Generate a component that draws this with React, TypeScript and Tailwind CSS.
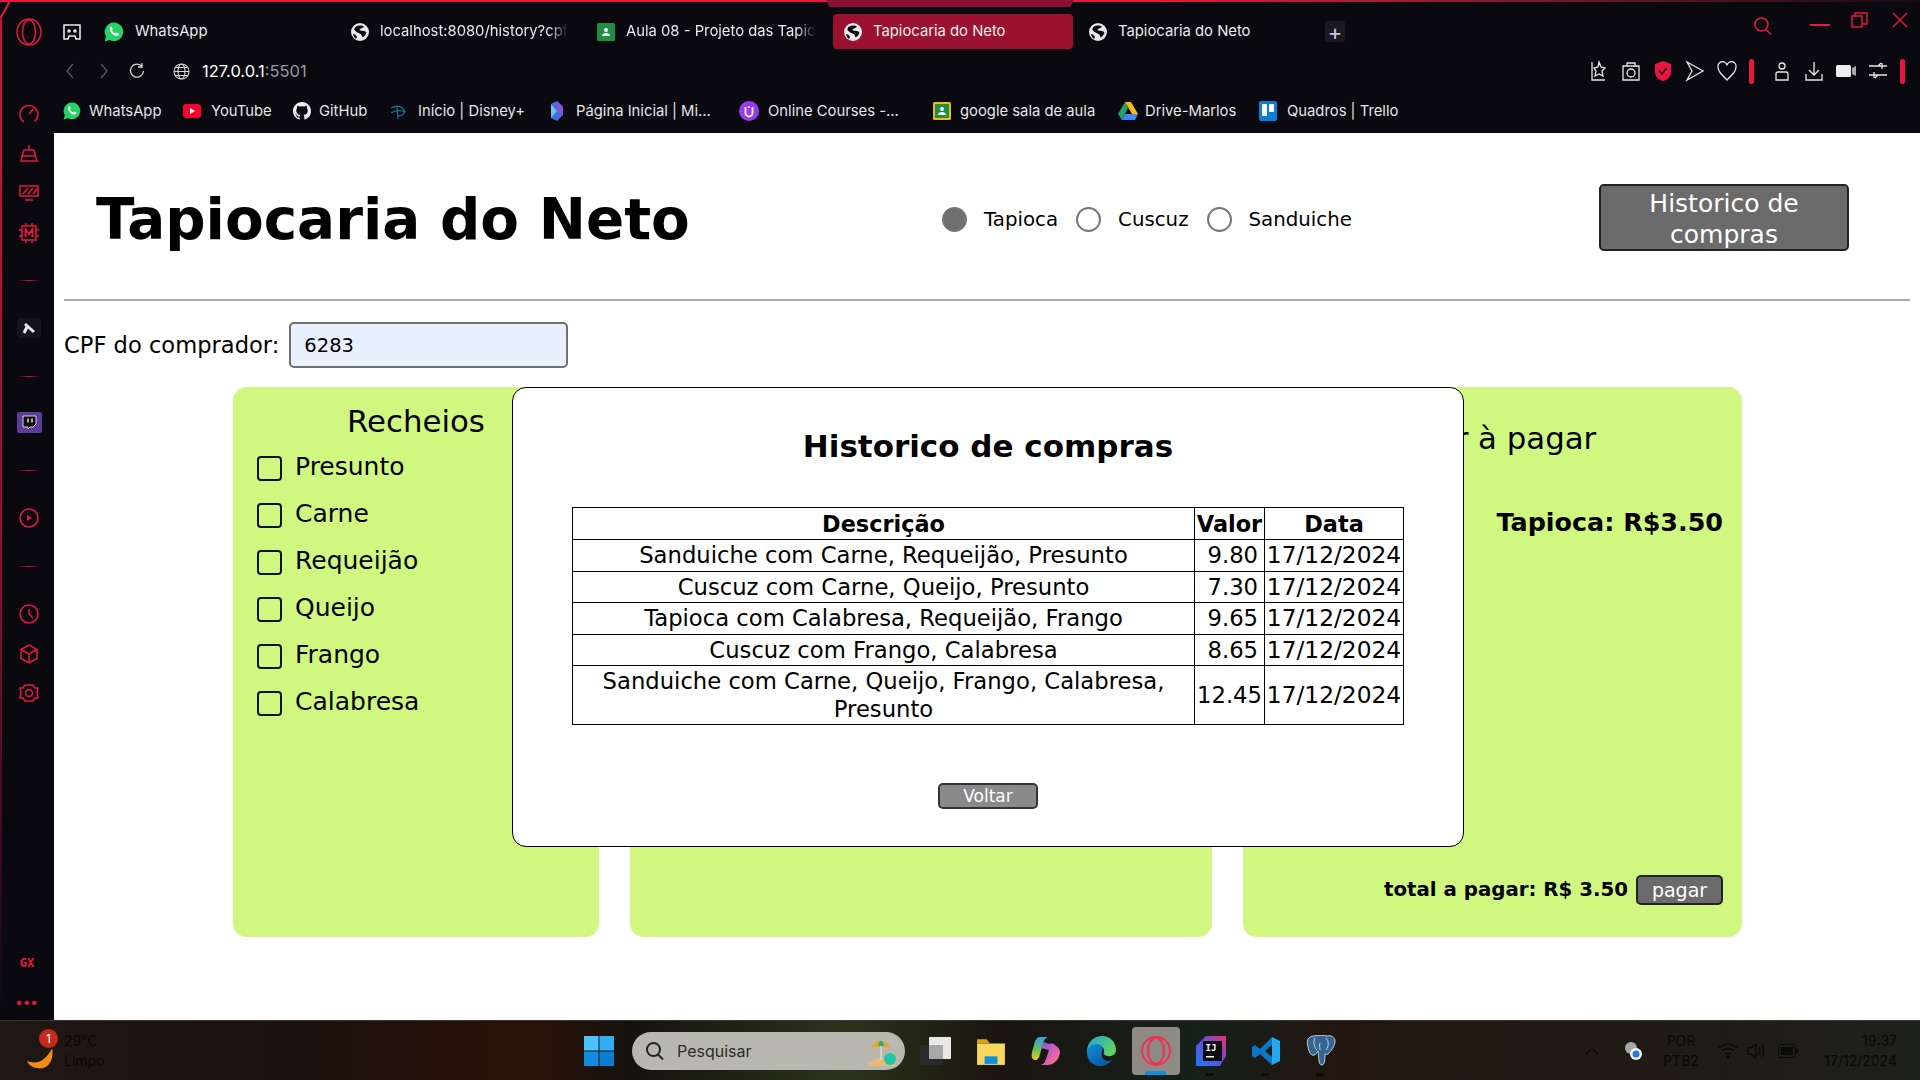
import { ReactNode } from "react";

const UI = "font-['Inter','Noto_Sans',sans-serif]";
const PAGE = "font-['DejaVu_Sans',sans-serif]";
const RED = "#e8173f";

function Globe() {
  return (
    <svg width="18" height="18" viewBox="0 0 18 18" className="shrink-0">
      <circle cx="9" cy="9" r="9" fill="#e9e9ea" />
      <path d="M5 3.500c2-1.500 6-1.500 8 0-1 2-4 1.500-4.500 3.500 2 1.500 5 0 7 2.500-.5 2-2 4-4 5-.5-2-1-3.500-3-4-2-1-4-2-5-3.500C3 6 4 4.500 5 3.500z" fill="#0a0a10" />
      <path d="M2 11c1.500 0 3 1 4 3l-1 2c-1.500-1-2.500-3-3-5z" fill="#0a0a10" />
    </svg>
  );
}

function WhatsIcon({ size = 20 }: { size?: number }) {
  return (
    <svg width={size} height={size} viewBox="0 0 20 20" className="shrink-0">
      <path d="M10 .5a9.3 9.3 0 0 0-8 14L.7 19.4l5-1.3A9.3 9.3 0 1 0 10 .5z" fill="#25d366" />
      <path d="M6.6 5.2c-.9.8-1.2 2-.6 3.400 1 2.400 3 4.400 5.500 5.300 1.400.5 2.500.1 3.200-.8.400-.6.300-1.200-.1-1.500l-1.700-.9c-.4-.2-.7-.1-1 .2l-.6.7c-1.400-.5-2.700-1.700-3.400-3.100l.6-.7c.2-.3.3-.6.100-1l-.7-1.600c-.3-.6-1.600-.7-2.300 0z" fill="#fff" />
    </svg>
  );
}

function ClassroomIcon({ border = "#1e8e3e" }: { border?: string }) {
  return (
    <svg width="18" height="18" viewBox="0 0 18 18" className="shrink-0">
      <rect width="18" height="18" rx="1.5" fill={border} />
      <rect x="2" y="2" width="14" height="14" fill="#1f8f46" />
      <circle cx="9" cy="7" r="2" fill="#fff" />
      <path d="M5 13c0-2 2-3 4-3s4 1 4 3z" fill="#fff" />
    </svg>
  );
}

function Tab({ icon, label, className, fade }: { icon: ReactNode; label: string; className: string; fade?: boolean }) {
  return (
    <div className={`h-[35px] flex items-center shrink-0 rounded-[4px] whitespace-nowrap text-[14.8px] text-[#ececec] ${className}`}>
      {icon}
      <span className={`ml-[11px] ${fade ? "[mask-image:linear-gradient(90deg,#000_90%,transparent)]" : ""}`}>{label}</span>
    </div>
  );
}

function Bookmark({ icon, label, className }: { icon: ReactNode; label: string; className: string }) {
  return (
    <div className={`flex items-center shrink-0 whitespace-nowrap text-[14.8px] text-[#e6e6e6] ${className}`}>
      {icon}
      <span>{label}</span>
    </div>
  );
}

function ToolIcon({ d }: { d: string }) {
  return (
    <svg width="20" height="22" viewBox="0 0 20 22" fill="none" stroke="#e8e8e8" strokeWidth="1.3" className="shrink-0">
      <path d={d} />
    </svg>
  );
}

function TopBar() {
  return (
    <header className={`h-[133px] shrink-0 bg-[#09090f] relative ${UI}`}>
      <div className="h-[2px] bg-gradient-to-r from-[#e8173f] via-[#e8173f] via-60% to-[#1a0a12]" />
      <div className="absolute left-0 top-[16px] bottom-0 w-[2px] bg-[#c01537]" />
      <svg width="12" height="17" viewBox="0 0 12 17" fill="none" stroke={RED} strokeWidth="2" className="absolute left-0 top-0">
        <path d="M1 17L10 1" />
      </svg>
      <div className="absolute left-[826px] top-0 w-[248px] h-[7px] bg-[#8a1230] [clip-path:polygon(0_0,100%_0,98.5%_100%,1.5%_100%)]" />
      <div className="h-[12px]" />
      {/* tabs */}
      <div className="flex items-center h-[35px]">
        <svg width="26" height="28" viewBox="0 0 26 28" fill="none" stroke={RED} strokeWidth="1.5" className="ml-[16px] mr-[21px] shrink-0">
          <ellipse cx="13" cy="14" rx="12" ry="13" />
          <ellipse cx="13" cy="14" rx="6.5" ry="12" />
        </svg>
        <svg width="18" height="16" viewBox="0 0 18 16" fill="none" stroke="#eee" strokeWidth="1.5" className="mr-[23px] shrink-0">
          <path d="M1 1h16v14h-4l-1-3H6l-1 3H1z" />
          <circle cx="6" cy="7" r="1" fill="#eee" />
          <circle cx="12" cy="7" r="1" fill="#eee" />
        </svg>
        <Tab icon={<WhatsIcon />} label="WhatsApp" className="w-[236px]" />
        <Tab icon={<Globe />} label="localhost:8080/history?cpf" fade className="w-[257px] pl-[11px]" />
        <Tab icon={<ClassroomIcon />} label="Aula 08 - Projeto das Tapio" fade className="w-[236px]" />
        <Tab icon={<Globe />} label="Tapiocaria do Neto" className="w-[240px] pl-[11px] bg-[#9a1230]" />
        <Tab icon={<Globe />} label="Tapiocaria do Neto" className="w-[252px] pl-[16px]" />
        <div className="w-[20px] h-[21px] rounded-[3px] bg-[#1a1a24] flex items-center justify-center text-[#c8c8d0] text-[22px] leading-none">+</div>
        <div className="ml-auto flex items-center mr-[12px]">
          <svg width="20" height="20" viewBox="0 0 20 20" fill="none" stroke={RED} strokeWidth="1.5" className="mr-[37px] mb-[12px]">
            <circle cx="8.5" cy="8.5" r="6.5" />
            <path d="M13 13.500l5 5" />
          </svg>
          <div className="w-[20px] h-[2px] bg-[#e8173f] mr-[21px] mb-[14px]" />
          <svg width="17" height="16" viewBox="0 0 17 16" fill="none" stroke={RED} strokeWidth="1.5" className="mr-[24px] mb-[24px]">
            <rect x="1" y="4" width="10" height="11" />
            <path d="M4 4V1h12v11h-5" />
          </svg>
          <svg width="16" height="16" viewBox="0 0 16 16" fill="none" stroke={RED} strokeWidth="1.5" className="mb-[24px]">
            <path d="M1 1l14 14M15 1L1 15" />
          </svg>
        </div>
      </div>
      {/* address */}
      <div className="flex items-center h-[36px] mt-[4px]">
        <svg width="14" height="18" viewBox="0 0 14 18" fill="none" stroke="#5a5a60" strokeWidth="1.3" className="ml-[63px]"><path d="M10 2L4 9l6 7" /></svg>
        <svg width="14" height="18" viewBox="0 0 14 18" fill="none" stroke="#5a5a60" strokeWidth="1.3" className="ml-[20px]"><path d="M4 2l6 7-6 7" /></svg>
        <svg width="18" height="18" viewBox="0 0 18 18" fill="none" stroke="#d8d8d8" strokeWidth="1.3" className="ml-[17px]"><path d="M14 4.500A6.500 6.500 0 1 0 15.500 9M14 1v4h-4" /></svg>
        <svg width="17" height="17" viewBox="0 0 17 17" fill="none" stroke="#d8d8d8" strokeWidth="1.1" className="ml-[27px]">
          <circle cx="8.5" cy="8.5" r="7.5" />
          <ellipse cx="8.5" cy="8.5" rx="3.5" ry="7.5" />
          <path d="M1 8.500h15M2 4.500h13M2 12.500h13" />
        </svg>
        <span className="ml-[12px] text-[16.5px] text-white">127.0.0.1<span className="text-[#9a9aa4]">:5501</span></span>
        <div className="ml-auto flex items-center mr-[15px]">
          <div className="flex items-center gap-[12px]">
            <ToolIcon d="M3 2v18h13M10 2l2 5 4 1-3 3 1 5-4-2-4 2 1-5-2-3 4-1z" />
            <ToolIcon d="M2 6h16v14H2zM6 6V3h8v3M10 9a4 4 0 1 0 0 8 4 4 0 0 0 0-8z" />
            <svg width="20" height="22" viewBox="0 0 20 22" className="shrink-0">
              <path d="M10 1l8 3v8c0 5-4 8-8 9-4-1-8-4-8-9V4z" fill={RED} />
              <path d="M6.500 11l2.500 3 4.500-6" fill="none" stroke="#111" strokeWidth="1.5" />
            </svg>
            <ToolIcon d="M2 2l16 9-16 9 5-9z" />
            <ToolIcon d="M10 20C4 14 1 11 1 7a4.500 4.500 0 0 1 9-1.500A4.500 4.500 0 0 1 19 7c0 4-3 7-9 13z" />
          </div>
          <div className="w-[5px] h-[25px] rounded-full bg-[#e8173f] ml-[12px]" />
          <div className="flex items-center gap-[12px] ml-[18px]">
            <ToolIcon d="M7 6a3 3 0 1 0 6 0 3 3 0 0 0-6 0zM4 20v-6a2 2 0 0 1 2-2h8a2 2 0 0 1 2 2v6z" />
            <ToolIcon d="M10 2v13M5 10l5 5 5-5M2 14v6h16v-6" />
            <svg width="20" height="14" viewBox="0 0 20 14" className="shrink-0">
              <rect x="0" y="1" width="15" height="12" rx="1.5" fill="#eee" />
              <path d="M16 4l4-2v10l-4-2z" fill="#aaa" />
            </svg>
            <ToolIcon d="M1 6h18M13 3l-3 3M1 15h18M7 18l3-3M14 3v6M6 12v6" />
          </div>
          <div className="w-[5px] h-[25px] rounded-full bg-[#e8173f] ml-[12px]" />
        </div>
      </div>
      {/* bookmarks */}
      <div className="flex items-center h-[26px] mt-[9px]">
        <svg width="20" height="20" viewBox="0 0 20 20" fill="none" stroke={RED} strokeWidth="1.5" className="ml-[19px] mr-[24px] mt-[5px] shrink-0">
          <path d="M5 18A9 9 0 1 1 15.500 17.500M10 10l4.500-5" />
        </svg>
        <Bookmark icon={<WhatsIcon size={18} />} label="WhatsApp" className="w-[120px] gap-[8px]" />
        <Bookmark
          icon={
            <svg width="18" height="14" viewBox="0 0 18 14" className="shrink-0">
              <rect width="18" height="14" rx="3" fill="#f5052d" />
              <path d="M7 4l5 3-5 3z" fill="#fff" />
            </svg>
          }
          label="YouTube"
          className="w-[110px] gap-[10px]"
        />
        <Bookmark
          icon={
            <svg width="18" height="18" viewBox="0 0 16 16" fill="#f0f0f0" className="shrink-0">
              <path d="M8 0C3.580 0 0 3.580 0 8c0 3.540 2.290 6.530 5.470 7.590.4.070.55-.17.55-.38 0-.19-.01-.82-.01-1.490-2.010.37-2.530-.49-2.690-.94-.09-.23-.48-.94-.82-1.130-.28-.15-.68-.52-.01-.53.63-.01 1.080.58 1.230.82.720 1.210 1.870.870 2.330.66.070-.52.280-.87.510-1.070-1.780-.2-3.640-.89-3.640-3.950 0-.87.310-1.590.820-2.150-.08-.2-.36-1.020.08-2.120 0 0 .67-.21 2.200.82.640-.18 1.320-.27 2-.27s1.360.09 2 .27c1.530-1.040 2.200-.82 2.200-.82.440 1.100.160 1.920.080 2.120.51.560.82 1.270.82 2.150 0 3.070-1.870 3.750-3.650 3.950.290.250.540.730.540 1.480 0 1.070-.01 1.930-.01 2.200 0 .210.150.460.550.380A8.010 8.010 0 0 0 16 8c0-4.420-3.580-8-8-8z" />
            </svg>
          }
          label="GitHub"
          className="w-[97px] gap-[8px]"
        />
        <Bookmark
          icon={
            <svg width="18" height="18" viewBox="0 0 18 18" fill="none" stroke="#1a6f8a" strokeWidth="1.3" className="shrink-0">
              <path d="M1 6c5-3 11-2 13 2 1.500 3-1 6-6 6M7 5l1 12M1 11c3-2 9-3 15-1" />
            </svg>
          }
          label="Início | Disney+"
          className="w-[158px] gap-[10px]"
        />
        <Bookmark
          icon={
            <svg width="18" height="20" viewBox="0 0 18 20" className="shrink-0">
              <path d="M3 3l6-3 6 6v8l-6 6-6-3z" fill="#3f6fd8" />
              <path d="M9 0l6 6v8L9 11z" fill="#8a54d8" />
              <path d="M3 3l6 7-6 7z" fill="#6ec0e8" />
            </svg>
          }
          label="Página Inicial | Mi..."
          className="w-[191px] gap-[10px]"
        />
        <Bookmark
          icon={
            <svg width="20" height="20" viewBox="0 0 20 20" className="shrink-0">
              <circle cx="10" cy="10" r="10" fill="#9a3bf0" />
              <path d="M6.500 6v6a3.500 3.500 0 0 0 7 0V6" fill="none" stroke="#fff" strokeWidth="1.8" />
              <circle cx="10" cy="6" r="1" fill="#fff" />
            </svg>
          }
          label="Online Courses -..."
          className="w-[194px] gap-[9px]"
        />
        <Bookmark icon={<ClassroomIcon border="#f2b90f" />} label="google sala de aula" className="w-[185px] gap-[9px]" />
        <Bookmark
          icon={
            <svg width="20" height="18" viewBox="0 0 20 18" className="shrink-0">
              <path d="M7 0h6l7 12h-6z" fill="#f9bc15" />
              <path d="M7 0l3 6-6 12-4-6z" fill="#1fa463" />
              <path d="M4 18l3-6h13l-3 6z" fill="#4286f5" />
            </svg>
          }
          label="Drive-Marlos"
          className="w-[141px] gap-[7px]"
        />
        <Bookmark
          icon={
            <svg width="18" height="20" viewBox="0 0 18 20" className="shrink-0">
              <rect width="18" height="20" rx="2" fill="#0a7fd4" />
              <rect x="3" y="3" width="5" height="12" rx="0.8" fill="#fff" />
              <rect x="10" y="3" width="5" height="8" rx="0.8" fill="#fff" />
            </svg>
          }
          label="Quadros | Trello"
          className="w-[160px] gap-[10px]"
        />
      </div>
    </header>
  );
}

function Divider({ className }: { className: string }) {
  return <div className={`h-[1px] w-[24px] shrink-0 bg-gradient-to-r from-transparent via-[#c01537] to-transparent ${className}`} />;
}

function SideIcon({ children, className }: { children: ReactNode; className: string }) {
  return <div className={`flex justify-center h-[24px] shrink-0 items-center ${className}`}>{children}</div>;
}

function Sidebar() {
  const ic = { fill: "none", stroke: RED, strokeWidth: 1.5 };
  return (
    <aside className={`w-[54px] shrink-0 bg-[#09090f] flex flex-col items-center pl-[4px] pt-[9px] relative ${UI}`}>
      <div className="absolute left-0 top-0 bottom-0 w-[2px] bg-gradient-to-b from-[#c01537] via-[#8a1030] to-transparent" />
      <SideIcon className="">
        <svg width="20" height="18" viewBox="0 0 20 18" {...ic}>
          <path d="M10 0v5M5 5h10l3 11H2zM2 11h14M18 16h1" />
        </svg>
      </SideIcon>
      <SideIcon className="mt-[15px]">
        <svg width="20" height="16" viewBox="0 0 20 16" {...ic}>
          <path d="M1 1h18v10H1zM6 15h8M4 9l5-6M9 9l5-6M14 9l4-5" />
        </svg>
      </SideIcon>
      <SideIcon className="mt-[16px]">
        <svg width="22" height="22" viewBox="0 0 22 22" {...ic}>
          <path d="M4 4h14v14H4zM8 1v3M14 1v3M8 18v3M14 18v3M1 8h3M1 14h3M18 8h3M18 14h3" />
          <path d="M7.500 15V7.500L11 12l3.500-4.500V15" strokeWidth="2" />
        </svg>
      </SideIcon>
      <Divider className="mt-[35px]" />
      <div className="mt-[37px] w-[24px] h-[20px] rounded-[3px] bg-[#14141c] flex items-center justify-center">
        <svg width="14" height="12" viewBox="0 0 14 12" fill="none" stroke="#e8e8e8" strokeWidth="3">
          <path d="M2 11l4-8M3 2l9 8" />
        </svg>
      </div>
      <Divider className="mt-[38px]" />
      <div className="mt-[35px] w-[25px] h-[21px] rounded-[2px] bg-[#5d3c9c] flex items-center justify-center">
        <svg width="15" height="15" viewBox="0 0 15 15">
          <path d="M1 1h13v8l-3 3H8l-2 2v-2H1z" fill="#0f0f14" stroke="#fff" strokeWidth="0.8" />
          <path d="M6 3.500v4M10 3.500v4" stroke="#fff" strokeWidth="1.3" />
        </svg>
      </div>
      <Divider className="mt-[37px]" />
      <SideIcon className="mt-[35px]">
        <svg width="20" height="20" viewBox="0 0 20 20" {...ic}>
          <circle cx="10" cy="10" r="9" />
          <path d="M8 7l5 3-5 3z" fill={RED} stroke="none" />
        </svg>
      </SideIcon>
      <Divider className="mt-[36px]" />
      <SideIcon className="mt-[35px]">
        <svg width="20" height="20" viewBox="0 0 20 20" {...ic}>
          <circle cx="10" cy="10" r="9" />
          <path d="M10 5v5l4 4" />
        </svg>
      </SideIcon>
      <SideIcon className="mt-[16px]">
        <svg width="20" height="20" viewBox="0 0 20 20" {...ic}>
          <path d="M10 1l8 4.500v9L10 19l-8-4.500v-9zM2 5.500L10 10l8-4.500M10 10v9" />
        </svg>
      </SideIcon>
      <SideIcon className="mt-[15px]">
        <svg width="20" height="20" viewBox="0 0 20 20" {...ic}>
          <path d="M6 2h8l2 3h3l-1 5 1 5h-3l-2 3H6l-2-3H1l1-5-1-5h3z" strokeLinejoin="round" />
          <circle cx="10" cy="10" r="3.5" />
        </svg>
      </SideIcon>
      <div className="mt-auto mb-[12px] flex flex-col items-center gap-[27px] -ml-[4px]">
        <span className="text-[12px] font-bold text-[#e8173f] font-['DejaVu_Sans_Mono',monospace] leading-none">GX</span>
        <span className="text-[#e8173f] text-[14px] font-bold leading-[12px] tracking-[1px]">•••</span>
      </div>
    </aside>
  );
}

function Check({ label }: { label: string }) {
  return (
    <label className="flex items-center h-[47px]">
      <span className="w-[25px] h-[25px] rounded-[4px] border-2 border-[#111] shrink-0 mt-[3px]" />
      <span className="ml-[13px] text-[25px] leading-none text-black">{label}</span>
    </label>
  );
}

function Radio({ label, checked }: { label: string; checked?: boolean }) {
  return (
    <label className="flex items-center">
      <span className={`w-[25px] h-[25px] rounded-full border-2 border-[#767676] shrink-0 ${checked ? "bg-[#6f6f6f]" : "bg-white"}`} />
      <span className="text-[19.8px] text-black ml-[17px]">{label}</span>
    </label>
  );
}

const rows = [
  ["Sanduiche com Carne, Requeijão, Presunto", "9.80"],
  ["Cuscuz com Carne, Queijo, Presunto", "7.30"],
  ["Tapioca com Calabresa, Requeijão, Frango", "9.65"],
  ["Cuscuz com Frango, Calabresa", "8.65"],
];

function HistoryRow({ desc, value, tall }: { desc: string; value: string; tall?: boolean }) {
  return (
    <tr className={tall ? "h-[59px]" : "h-[31.5px]"}>
      <td className="border border-black text-center px-[20px]">{desc}</td>
      <td className="border border-black text-center whitespace-nowrap">{tall ? value : <span className="block text-right pr-[6px]">{value}</span>}</td>
      <td className="border border-black text-center whitespace-nowrap text-[23.3px]">17/12/2024</td>
    </tr>
  );
}

function HistoryModal() {
  return (
    <div className="absolute left-[458px] top-[254px] w-[952px] h-[460px] bg-white border border-black rounded-[14px] flex flex-col items-center">
      <h2 className="mt-[39px] text-[31px] font-bold text-black leading-[38px]">Historico de compras</h2>
      <table className="mt-[42px] w-[831px] border-collapse text-[22.7px] text-black leading-[28px] table-fixed">
        <colgroup>
          <col className="w-[622px]" />
          <col className="w-[70px]" />
          <col className="w-[139px]" />
        </colgroup>
        <thead>
          <tr className="h-[32px] text-[22.4px]">
            <th className="border border-black font-bold">Descrição</th>
            <th className="border border-black font-bold px-[1px]">Valor</th>
            <th className="border border-black font-bold">Data</th>
          </tr>
        </thead>
        <tbody>
          {rows.map(([desc, value]) => (
            <HistoryRow key={desc} desc={desc} value={value} />
          ))}
          <HistoryRow desc="Sanduiche com Carne, Queijo, Frango, Calabresa, Presunto" value="12.45" tall />
        </tbody>
      </table>
      <button type="button" className="mt-[58px] w-[100px] h-[26px] rounded-[5px] bg-[#8a8a8a] border-2 border-[#333] text-white text-[17px] leading-none">
        Voltar
      </button>
    </div>
  );
}

function Page() {
  return (
    <main className={`flex-1 bg-white relative pl-[10px] pr-[10px] overflow-hidden ${PAGE}`}>
      <div className="flex items-center h-[168px] pt-[7px] border-b-2 border-b-[#a8a8a8]">
        <h1 className="ml-[32px] mt-[2px] text-[56.4px] font-bold text-black whitespace-nowrap leading-none w-[846px]">Tapiocaria do Neto</h1>
        <div className="flex items-center gap-[18px]">
          <Radio label="Tapioca" checked />
          <Radio label="Cuscuz" />
          <Radio label="Sanduiche" />
        </div>
        <button type="button" className="ml-auto mr-[61px] w-[250px] h-[67px] -mt-[5px] rounded-[5px] bg-[#6b6b6b] border-2 border-[#222] text-white text-[25px] leading-[31px] pt-[2px]">
          Historico de compras
        </button>
      </div>
      <div className="flex items-center mt-[21px]">
        <label className="text-[22.6px] text-black pt-[2px]">CPF do comprador:</label>
        <div className="ml-[10px] w-[279px] h-[46px] rounded-[5px] bg-[#e8f0fe] border-2 border-[#707070] flex items-center pl-[13px] pt-[2px] text-[19.5px] text-black">6283</div>
      </div>
      <div className="flex mt-[19px] ml-[169px] h-[550px] gap-[31px]">
        <section className="w-[366px] bg-[#d0f880] rounded-[14px]">
          <h3 className="text-[30.8px] text-black leading-[38px] mt-[15px] text-center">Recheios</h3>
          <div className="mt-[3px] pl-[24px]">
            <Check label="Presunto" />
            <Check label="Carne" />
            <Check label="Requeijão" />
            <Check label="Queijo" />
            <Check label="Frango" />
            <Check label="Calabresa" />
          </div>
        </section>
        <section className="w-[582px] bg-[#d0f880] rounded-[14px]" />
        <section className="w-[499px] bg-[#d0f880] rounded-[14px] flex flex-col pr-[19px]">
          <h3 className="text-[30.8px] text-black leading-[38px] mt-[32px] text-center pl-[21px] whitespace-nowrap">Valor à pagar</h3>
          <p className="self-end mt-[49px] text-[25.4px] font-bold text-black leading-[32px]">Tapioca: R$3.50</p>
          <div className="mt-auto mb-[32px] flex items-center justify-end gap-[8px]">
            <span className="text-[19.8px] font-bold text-black">total a pagar: R$ 3.50</span>
            <button type="button" className="w-[87px] h-[30px] rounded-[5px] bg-[#6b6b6b] border-2 border-[#222] text-white text-[19px] leading-none">pagar</button>
          </div>
        </section>
      </div>
      <HistoryModal />
    </main>
  );
}

function Slot({ children, dot }: { children: ReactNode; dot?: boolean }) {
  return (
    <div className="relative w-[55px] h-[60px] shrink-0 flex items-center justify-center">
      {children}
      {dot && <span className="absolute bottom-[5px] left-[23px] w-[8px] h-[3px] rounded-full bg-[#0c0c0c]" />}
    </div>
  );
}

function Taskbar() {
  return (
    <footer className={`h-[60px] shrink-0 flex items-center relative border-t border-t-[#3a3530] bg-[linear-gradient(90deg,#201814_0%,#1c120e_15%,#2a1209_28%,#15130f_33%,#2c331a_44%,#1a1510_52%,#16201a_62%,#22150f_70%,#1e201c_100%)] ${UI}`}>
      <div className="w-[155px] flex items-center pl-[26px] relative h-full shrink-0">
        <svg width="28" height="24" viewBox="0 0 30 24" className="mt-[14px]">
          <path d="M28 2c2 10-3 22-14 21C8 23 3 20 1 15c6 3 14 2 18-2 4-3 6-7 9-11z" fill="#f08c12" />
        </svg>
        <span className="absolute left-[39px] top-[8px] w-[19px] h-[19px] rounded-full bg-[#c42b1c] text-white text-[12px] flex items-center justify-center">1</span>
        <div className="absolute left-[64px] top-[10px] text-[#070707] text-[14px] leading-[20px]">
          <div>29°C</div>
          <div>Limpo</div>
        </div>
      </div>
      <svg width="30" height="30" viewBox="0 0 30 30" className="shrink-0 ml-[429px]">
        <rect width="14.5" height="14.5" fill="#4cc2ff" />
        <rect x="15.5" width="14.5" height="14.5" fill="#2fb0f5" />
        <rect y="15.5" width="14.5" height="14.5" fill="#0f8ee0" />
        <rect x="15.5" y="15.5" width="14.5" height="14.5" fill="#0a7fd4" />
      </svg>
      <div className="ml-[18px] w-[273px] h-[38px] rounded-full bg-[#b8b8b0] flex items-center pl-[13px] text-[16px] text-[#2c2c2c] shrink-0">
        <svg width="20" height="20" viewBox="0 0 20 20" fill="none" stroke="#222" strokeWidth="2">
          <circle cx="8.5" cy="8.5" r="6.5" />
          <path d="M13 13.500l5 5" />
        </svg>
        <span className="ml-[12px]">Pesquisar</span>
        <svg width="32" height="30" viewBox="0 0 32 30" className="ml-auto mr-[7px]">
          <path d="M1 29c6-8 20-10 29-2l-2 3H3z" fill="#e8b878" />
          <path d="M6 11c1-8 15-8 18 0z" fill="#e8a820" />
          <path d="M12 10c1-7 5-7 6 0z" fill="#2aa890" />
          <path d="M15 10v14" stroke="#ddd" strokeWidth="1.5" />
          <circle cx="24" cy="23" r="6" fill="#1fc9a8" />
        </svg>
      </div>
      <div className="flex items-center ml-[3px]">
        <Slot>
          <div className="relative w-[31px] h-[28px]">
            <div className="absolute left-0 bottom-0 w-[23px] h-[20px] rounded-[2px] bg-[#2a2a2a]" />
            <div className="absolute right-0 top-0 w-[22px] h-[22px] rounded-[1px] bg-[#e8e8e8]" />
            <div className="absolute left-[9px] bottom-[6px] w-[14px] h-[14px] bg-[#a8a8a8]" />
          </div>
        </Slot>
        <Slot>
          <svg width="30" height="30" viewBox="0 0 28 28">
            <path d="M1 7h26v20H1z" fill="#f9d65c" />
            <path d="M1 7V3h9l3 4z" fill="#e0a010" />
            <rect x="8" y="19" width="12" height="7" fill="#0f8ee0" />
          </svg>
        </Slot>
        <Slot>
          <svg width="30" height="30" viewBox="0 0 30 30">
            <defs>
              <linearGradient id="cpA" x1="0" y1="0" x2="0" y2="1">
                <stop offset="0" stopColor="#3aa0e8" />
                <stop offset="0.5" stopColor="#5cc060" />
                <stop offset="1" stopColor="#f2c81e" />
              </linearGradient>
              <linearGradient id="cpB" x1="0" y1="0" x2="1" y2="1">
                <stop offset="0" stopColor="#7a5ae8" />
                <stop offset="0.6" stopColor="#e060b0" />
                <stop offset="1" stopColor="#f58a50" />
              </linearGradient>
            </defs>
            <path d="M9 1h8c-3 1-4 3-5 7l-3 10c-1 4-2 6-5 6-3 0-4-4-3-8l2-7C4 4 6 1 9 1z" fill="url(#cpA)" />
            <path d="M13 6l5 2c3-1 6 0 7 2 2 1 4 3 4 7-1 4-2 7-5 9-2 2-4 3-8 3h-6c3-1 4-3 5-6l3-9-8-2c1-3 2-5 3-6z" fill="url(#cpB)" />
          </svg>
        </Slot>
        <Slot>
          <svg width="30" height="30" viewBox="0 0 30 30">
            <defs>
              <linearGradient id="edA" x1="0" y1="0" x2="1" y2="0.6">
                <stop offset="0" stopColor="#1fa8d8" />
                <stop offset="1" stopColor="#62d060" />
              </linearGradient>
              <linearGradient id="edB" x1="0" y1="0" x2="1" y2="1">
                <stop offset="0" stopColor="#0f8ed8" />
                <stop offset="1" stopColor="#0c4f98" />
              </linearGradient>
            </defs>
            <path d="M1 14C2 6 8 0 16 0c8 0 14 6 14 14 0 5-5 7-9 6-3-1-4-2-3-4 1-4-3-7-8-6-4 1-7 4-9 4z" fill="url(#edA)" />
            <path d="M1 14c1-3 5-6 9-6 5-.5 8 3 6 8-2 7 5 11 10 8-3 4-7 6-12 6C6 30 0 23 1 14z" fill="url(#edB)" />
          </svg>
        </Slot>
        <Slot>
          <div className="relative w-[48px] h-[48px] rounded-[4px] bg-[#8f8a86] flex items-center justify-center">
            <svg width="30" height="30" viewBox="0 0 30 30" fill="none" stroke="#f0304f" strokeWidth="2">
              <ellipse cx="15" cy="15" rx="14" ry="14" />
              <ellipse cx="15" cy="15" rx="8" ry="13" />
            </svg>
            <span className="absolute bottom-0 left-[13px] w-[21px] h-[4px] rounded-t-[2px] bg-[#0f8ee0]" />
          </div>
        </Slot>
        <Slot dot>
          <svg width="30" height="30" viewBox="0 0 30 30">
            <defs>
              <linearGradient id="ijA" x1="0" y1="1" x2="1" y2="0">
                <stop offset="0" stopColor="#1a7cf5" />
                <stop offset="0.55" stopColor="#6a48e0" />
                <stop offset="1" stopColor="#f0306a" />
              </linearGradient>
            </defs>
            <path d="M10 0h20v20l-6 10H0V10z" fill="url(#ijA)" />
            <rect x="7" y="5" width="19" height="20" fill="#0c0c10" />
            <text x="9.5" y="15" fill="#fff" fontSize="9" fontFamily="DejaVu Sans Mono, monospace" fontWeight="bold">IJ</text>
            <rect x="10" y="20" width="8" height="1.5" fill="#fff" />
          </svg>
        </Slot>
        <Slot dot>
          <svg width="30" height="30" viewBox="0 0 30 30">
            <path d="M1 11l3-2 5 4 12-12v8l-7 6 7 6v8L9 18l-5 4-3-2z" fill="#0a78c8" />
            <path d="M21 1l8 4v20l-8 4z" fill="#23a9f2" />
          </svg>
        </Slot>
        <Slot dot>
          <svg width="30" height="32" viewBox="0 0 30 32">
            <path d="M8 1C2 1 0 6 2 12c1 5 3 9 6 8 2 0 3-3 4-4 1 5 0 14 4 14 3 0 3-7 3-11 1 0 2 1 3 0 3-3 7-8 7-13 0-4-4-6-8-5-3-1-8-1-13 0z" fill="#336791" stroke="#c8d0dc" strokeWidth="1" />
            <path d="M9 3c-2 4-1 9 2 12M20 3c3 3 3 8 0 12M14 8c-1 2 0 4 0 7" fill="none" stroke="#c8d0dc" strokeWidth="1" />
          </svg>
        </Slot>
      </div>
      <div className="ml-auto flex items-center mr-[23px]">
        <svg width="16" height="10" viewBox="0 0 16 10" fill="none" stroke="#0a0a0a" strokeWidth="1.5">
          <path d="M1 9l7-7 7 7" />
        </svg>
        <svg width="22" height="24" viewBox="0 0 22 24" className="ml-[22px]">
          <circle cx="9" cy="9" r="6" fill="#a8a8a8" />
          <circle cx="14" cy="15" r="6" fill="#f2f2f2" />
          <circle cx="14" cy="15" r="3.5" fill="#2a78d0" />
        </svg>
        <div className="ml-[17px] w-[40px] text-center text-[14px] leading-[20px] text-[#090909]">
          <div>POR</div>
          <div>PTB2</div>
        </div>
        <svg width="20" height="16" viewBox="0 0 20 16" fill="none" stroke="#0a0a0a" strokeWidth="1.3" className="ml-[17px]">
          <path d="M1 5c5-5 13-5 18 0M4 8c3-3 9-3 12 0M7 11c2-1.500 4-1.500 6 0" />
          <circle cx="10" cy="14" r="1" fill="#0a0a0a" />
        </svg>
        <svg width="20" height="18" viewBox="0 0 20 18" fill="none" stroke="#0a0a0a" strokeWidth="1.3" className="ml-[9px]">
          <path d="M1 6h3l5-4v14l-5-4H1zM12 5c1 2 1 6 0 8M15 3c2 3 2 9 0 12" />
        </svg>
        <svg width="20" height="14" viewBox="0 0 20 14" className="ml-[11px]">
          <rect x=".5" y=".5" width="17" height="13" rx="2" fill="none" stroke="#0a0a0a" />
          <rect x="3" y="3" width="12" height="8" fill="#0a0a0a" />
          <rect x="18" y="5" width="2" height="4" fill="#0a0a0a" />
        </svg>
        <div className="ml-[9px] w-[90px] text-right text-[14px] leading-[20px] text-[#090909]">
          <div>19:37</div>
          <div>17/12/2024</div>
        </div>
      </div>
    </footer>
  );
}

export default function App() {
  return (
    <div className="w-[1920px] h-[1080px] flex flex-col overflow-hidden bg-[#09090f]">
      <TopBar />
      <div className="flex flex-1 min-h-0">
        <Sidebar />
        <Page />
      </div>
      <Taskbar />
    </div>
  );
}
